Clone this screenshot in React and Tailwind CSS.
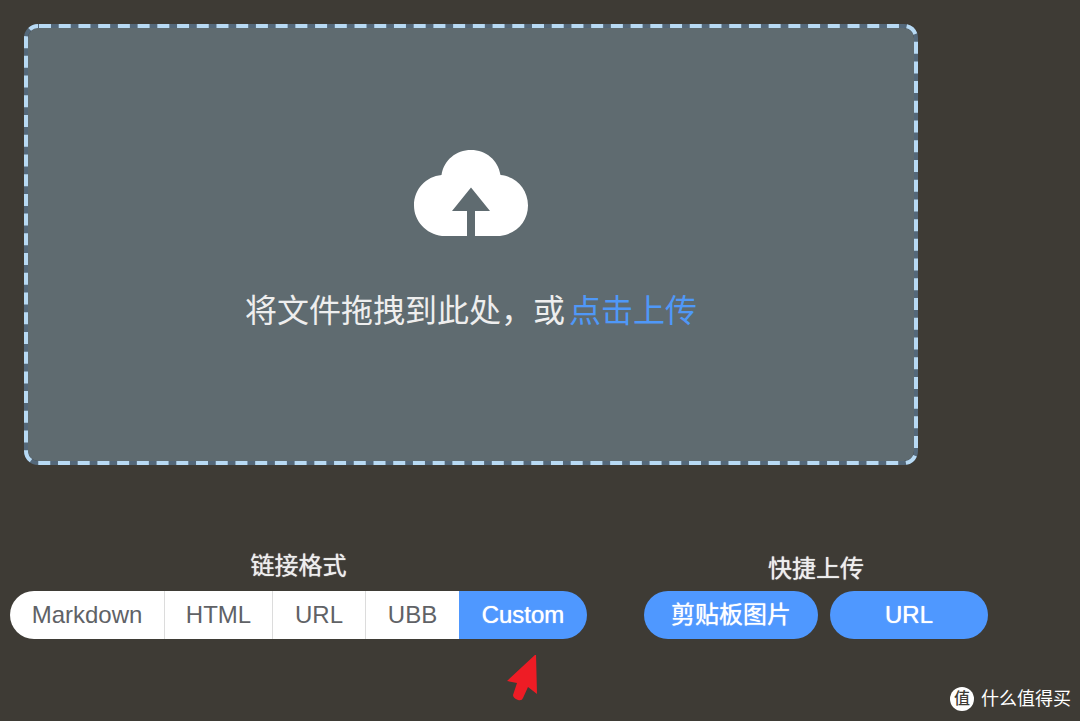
import { useState } from "react";

const formats = [
  { name: "Markdown", size: "w-[155px] rounded-l-full" },
  { name: "HTML", size: "w-[108px]" },
  { name: "URL", size: "w-[93px]" },
  { name: "UBB", size: "w-[93px]" },
  { name: "Custom", size: "w-[128px] rounded-r-full" },
];

function DashedOutline() {
  return (
    <svg className="pointer-events-none absolute inset-0 size-full" aria-hidden="true">
      <rect
        className="h-[calc(100%-4px)] w-[calc(100%-4px)]"
        x="2"
        y="2"
        rx="12"
        fill="none"
        stroke="#b8daf4"
        strokeWidth="4"
        strokeDasharray="12 7.72"
        strokeDashoffset="-1"
      />
    </svg>
  );
}

function CloudUpload() {
  return (
    <svg className="h-[86px] w-[114px]" viewBox="0 0 114 86" aria-hidden="true">
      <path
        fill="#ffffff"
        d="M28 86C12 84 0 71 0 55.500C0 39 12 26.500 27.500 25C30 10 42 0 57 0C72 0 84 10 86.500 25C102 26.500 114 39 114 55.500C114 71 103 84 86 86H61V61H76L57 37.500L38 61H53V86Z"
      />
    </svg>
  );
}

function Pointer() {
  return (
    <svg className="h-[47px] w-8" viewBox="0 0 32 47" aria-hidden="true">
      <path fill="#ee1c25" d="M30 -1L1 26L11 28L7 40Q7 43 12 45Q16 46 17 43L22 32L31 39Z" />
    </svg>
  );
}

export default function App() {
  const [format, setFormat] = useState("Custom");
  return (
    <main className="relative flex min-h-screen flex-col bg-[#3e3b35] pt-6 font-['Liberation_Sans','Noto_Sans_CJK_SC',sans-serif] text-[#eeeeee]">
      <label className="relative mr-[162px] ml-6 flex h-[441px] cursor-pointer flex-col items-center rounded-[14px] border-4 border-[#54687a] bg-[#5f6b70] bg-clip-padding pt-[122px]">
        <span className="pointer-events-none absolute -inset-1">
          <DashedOutline />
        </span>
        <CloudUpload />
        <span className="mt-[51px] text-[32px] leading-[48px]">
          将文件拖拽到此处，或
          <span className="ml-1 text-[#4f98f8]">点击上传</span>
        </span>
        <input type="file" className="sr-only" />
      </label>

      <div className="mt-[82px] flex gap-[57px] pl-[10px] text-2xl">
        <section className="flex flex-col items-center">
          <h2 className="h-11 pt-px leading-9 [text-shadow:0_0_1px_#eeeeee]">链接格式</h2>
          <div className="flex h-12">
            {formats.map(({ name, size }) => (
              <button
                key={name}
                type="button"
                aria-pressed={format === name}
                onClick={() => setFormat(name)}
                className={`${size} ${
                  format === name
                    ? "bg-[#4f98ff] text-white [text-shadow:0_0_1px_white]"
                    : "border-r border-[#dcdcdc] bg-white text-[#606266] nth-4:border-r-0"
                }`}
              >
                {name}
              </button>
            ))}
          </div>
          <div className="mt-4 self-end pr-[49px]">
            <Pointer />
          </div>
        </section>

        <section className="flex flex-col items-center">
          <h2 className="h-11 pt-1 leading-9 [text-shadow:0_0_1px_#eeeeee]">快捷上传</h2>
          <div className="flex h-12 gap-3">
            <button
              type="button"
              className="w-[174px] rounded-full bg-[#4f98ff] text-white [text-shadow:0_0_1px_white]"
            >
              剪贴板图片
            </button>
            <button
              type="button"
              className="w-[158px] rounded-full bg-[#4f98ff] text-white [text-shadow:0_0_1px_white]"
            >
              URL
            </button>
          </div>
        </section>
      </div>

      <div className="absolute right-[9px] bottom-2 flex items-center gap-[7px] text-lg text-white">
        <span className="flex size-6 items-center justify-center rounded-full bg-white text-base font-medium text-[#3e3b35]">
          值
        </span>
        <span>什么值得买</span>
      </div>
    </main>
  );
}
